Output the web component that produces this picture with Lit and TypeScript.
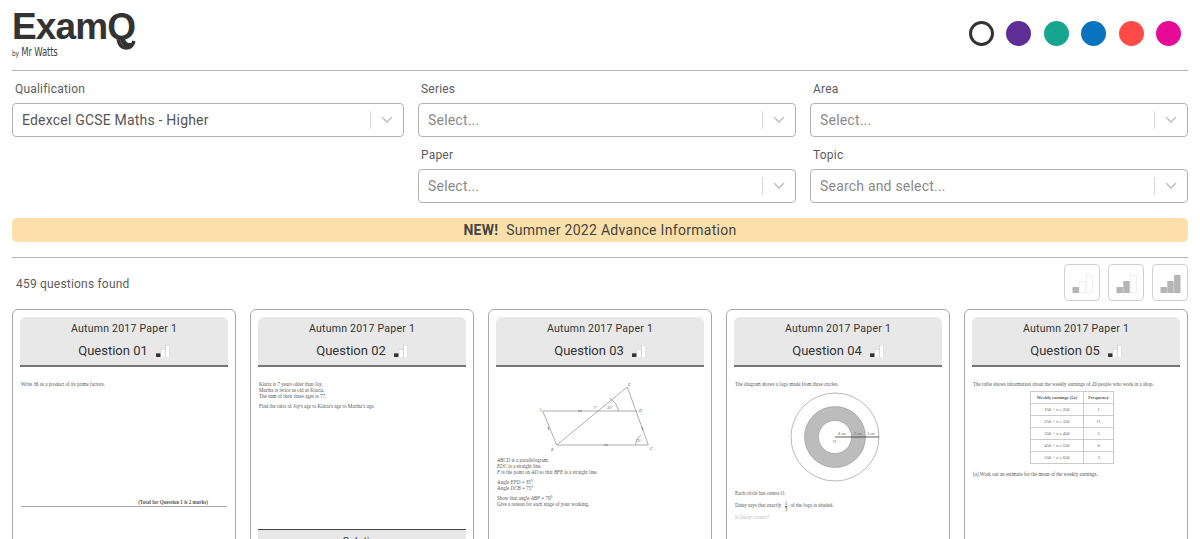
import { LitElement, html, css, svg } from 'lit';
import { customElement } from 'lit/decorators.js';

const SWATCHES = ['#5f2d96', '#16a58f', '#0a73bf', '#ff4a47', '#e60a96'];

const bars = (level: number, on: string, off: string) => html`
  <svg class="bars" viewBox="0 0 20 18" aria-hidden="true">
    ${[
      { x: 0, y: 12, h: 6 },
      { x: 6.8, y: 6, h: 12 },
      { x: 13.6, y: 0, h: 18 },
    ].map((b, i) =>
      i < level
        ? svg`<rect x=${b.x} y=${b.y} width="6.4" height=${b.h} fill=${on}></rect>`
        : svg`<rect x=${b.x + 0.3} y=${b.y + 0.3} width="5.8" height=${b.h - 0.6} fill="#fff" stroke=${off} stroke-width="0.6"></rect>`
    )}
  </svg>
`;

@customElement('select-field')
class SelectField extends LitElement {
  static properties = {
    label: { type: String },
    value: { type: String },
    placeholder: { type: String },
  };

  declare label: string;
  declare value: string;
  declare placeholder: string;

  static styles = css`
    :host {
      display: block;
    }
    .label {
      font-size: 12px;
      line-height: 18px;
      color: #5c5c5c;
      padding-left: 3px;
      letter-spacing: 0.2px;
      margin-bottom: 5px;
    }
    .control {
      display: flex;
      align-items: center;
      height: 34px;
      box-sizing: border-box;
      border: 1px solid #b3b3b3;
      border-radius: 4px;
      background: #fff;
      padding-left: 9px;
    }
    .text {
      flex: 1;
      font-size: 14px;
      letter-spacing: 0.2px;
      color: #555;
    }
    .text.empty {
      color: #8a8a8a;
    }
    .sep {
      width: 1px;
      height: 18px;
      background: #ddd;
    }
    svg {
      width: 32px;
      height: 12px;
      fill: none;
      stroke: #c4c4c4;
      stroke-width: 1.6;
    }
  `;

  render() {
    return html`
      ${this.label ? html`<div class="label">${this.label}</div>` : ''}
      <div class="control">
        <span class="text ${this.value ? '' : 'empty'}">${this.value || this.placeholder}</span>
        <span class="sep"></span>
        <svg viewBox="0 0 32 12"><path d="M11 3l5 5 5-5"></path></svg>
      </div>
    `;
  }
}

@customElement('app-root')
class AppRoot extends LitElement {
  static styles = css`
    :host {
      display: block;
      height: 539px;
      overflow: hidden;
      background: #fff;
      font-family: Roboto, 'Liberation Sans', sans-serif;
      color: #333;
    }
    .page {
      padding: 0 12px;
    }
    header {
      display: flex;
      justify-content: space-between;
      align-items: flex-start;
      height: 70px;
      border-bottom: 1px solid #b5b5b5;
    }
    .logo {
      padding-top: 7px;
      position: relative;
    }
    .logo-main {
      font-family: 'Liberation Sans', sans-serif;
      font-weight: 700;
      font-size: 37px;
      line-height: 39px;
      letter-spacing: -0.9px;
      color: #333;
    }
    .logo-by {
      font-family: 'DejaVu Sans Condensed', 'DejaVu Sans', sans-serif;
      font-size: 9.5px;
      line-height: 10px;
      color: #444;
      letter-spacing: -0.2px;
      transform: scaleY(1.2);
      transform-origin: left top;
    }
    .logo-by small {
      font-size: 6.5px;
    }
    .logo-tail {
      position: absolute;
      left: 104px;
      top: 38px;
      width: 20px;
      height: 12px;
      fill: none;
      stroke: #333;
      stroke-width: 3.4;
    }
    .swatches {
      display: flex;
      gap: 12.5px;
      padding: 20.5px 7px 0 0;
    }
    .swatch {
      width: 25px;
      height: 25px;
      border-radius: 50%;
      box-sizing: border-box;
    }
    .swatch.current {
      background: #fff;
      border: 3px solid #333;
    }
    .filters {
      display: grid;
      grid-template-columns: 392px 1fr 1fr;
      column-gap: 14px;
      row-gap: 9px;
      padding-top: 9px;
    }
    .filters .first {
      grid-column: 2;
    }
    .banner {
      margin-top: 15px;
      height: 24px;
      line-height: 24px;
      border-radius: 5px;
      background: #fddfa9;
      text-align: center;
      font-size: 14px;
      letter-spacing: 0.3px;
      color: #444;
    }
    .banner b {
      margin-right: 4px;
    }
    .rule {
      height: 1px;
      background: #b5b5b5;
      margin-top: 15px;
    }
    .toolbar {
      display: flex;
      align-items: center;
      gap: 8px;
      padding: 6px 0 8px 4px;
      height: 37px;
    }
    .count {
      flex: 1;
      font-size: 12px;
      letter-spacing: 0.2px;
      color: #5c5c5c;
      margin-top: 3px;
    }
    .level {
      width: 36px;
      height: 37px;
      box-sizing: border-box;
      border: 1px solid #d0d0d0;
      border-radius: 4px;
      background: #fff;
      display: flex;
      align-items: flex-end;
      justify-content: center;
      padding: 0 0 7px;
    }
    .level .bars {
      width: 21px;
      height: 18px;
    }
    .cards {
      display: grid;
      grid-template-columns: repeat(5, 224px);
      column-gap: 14px;
    }
    .card {
      box-sizing: border-box;
      height: 300px;
      border: 1px solid #a8a8a8;
      border-radius: 6px;
      padding: 7px;
      background: #fff;
    }
    .card-head {
      background: #e8e8e8;
      border-radius: 6px 6px 0 0;
      border-bottom: 2px solid #777;
      height: 48px;
      text-align: center;
      color: #333;
    }
    .paper {
      font-size: 10.5px;
      letter-spacing: 0.25px;
      line-height: 14px;
      padding-top: 5px;
    }
    .qnum {
      display: flex;
      align-items: center;
      justify-content: center;
      gap: 8px;
      font-size: 13px;
      line-height: 18px;
      margin-top: 6px;
    }
    .qnum .bars {
      width: 14px;
      height: 12.5px;
    }
    .sheet {
      font-family: 'Liberation Serif', serif;
      font-size: 5.05px;
      line-height: 6px;
      color: #555;
      height: 162px;
      padding: 14px 1px 0;
      box-sizing: border-box;
    }
    .sheet p {
      margin: 0 0 4px;
    }
    .total {
      text-align: right;
      font-weight: 700;
      margin-top: 112px;
      padding-right: 19px;
      border-bottom: 1px solid #aaa;
      line-height: 7px;
    }
    .answer {
      border-top: 1px solid #444;
      background: #e8e8e8;
      text-align: center;
      font-size: 10.5px;
      line-height: 16px;
      padding-top: 4px;
    }
    .figure {
      display: block;
      margin: 0 auto;
    }
    .figure text {
      font-family: 'Liberation Serif', serif;
      font-size: 4px;
      font-style: italic;
      fill: #555;
    }
    table {
      border-collapse: collapse;
      margin: 4px 0 7px 57px;
      width: 84px;
      table-layout: fixed;
      font-size: 4.5px;
      line-height: 11px;
      text-align: center;
    }
    td,
    th {
      border: 1px solid #ccc;
      padding: 0;
    }
    th:first-child {
      width: 52px;
    }
    .q3 {
      padding-top: 16px;
    }
    .q3 .text {
      padding-top: 2px;
    }
    .sheet .each {
      margin-top: 7px;
      margin-bottom: 5px;
    }
    .frac {
      display: inline-block;
      vertical-align: middle;
      text-align: center;
      line-height: 4.5px;
      margin: 0 2px;
    }
    .frac span {
      display: block;
    }
    .frac span:first-child {
      border-bottom: 0.5px solid #555;
    }
    .sheet .faint {
      color: #bbb;
      margin-top: -1px;
    }
  `;

  private sheet(index: number) {
    switch (index) {
      case 0:
        return html`
          <p>Write 36 as a product of its prime factors.</p>
          <div class="total">(Total for Question 1 is 2 marks)</div>
        `;
      case 1:
        return html`
          <p>Kiaria is 7 years older than Joy.<br />Martha is twice as old as Kiaria.<br />The sum of their three ages is 77.</p>
          <p>Find the ratio of Joy's age to Kiaria's age to Martha's age.</p>
        `;
      case 2:
        return html`
          <svg class="figure" width="208" height="72" viewBox="0 0 208 72">
            <g fill="none" stroke="#777" stroke-width="0.6">
              <path d="M45.7 28H139.7M45.7 28L59.7 62H151.3L130.3 4L59.7 62"></path>
              <path d="M112.3 15.3a17 17 0 0 1 9 12.7M138.7 62a12 12 0 0 1 5.3-10"></path>
            </g>
            <path d="M81 28h4M107 62h4M51 44l1 3M145 44l1 3" stroke="#666" stroke-width="0.8"></path>
            <text x="42" y="28">A</text>
            <text x="97" y="26">F</text>
            <text x="142" y="29">D</text>
            <text x="54" y="68">B</text>
            <text x="153" y="67">C</text>
            <text x="131" y="3">E</text>
            <text x="110" y="26" font-size="3.5">35°</text>
            <text x="139" y="59" font-size="3.5">75°</text>
          </svg>
          <div class="text">
            <p><i>ABCD</i> is a parallelogram.<br /><i>EDC</i> is a straight line.<br /><i>F</i> is the point on <i>AD</i> so that <i>BFE</i> is a straight line.</p>
            <p>Angle <i>EFD</i> = 35°<br />Angle <i>DCB</i> = 75°</p>
            <p>Show that angle <i>ABF</i> = 70°<br />Give a reason for each stage of your working.</p>
          </div>
        `;
      case 3:
        return html`
          <p>The diagram shows a logo made from three circles.</p>
          <svg class="figure" width="208" height="92" viewBox="0 0 208 92">
            <circle cx="100" cy="46" r="44" fill="#fff" stroke="#888" stroke-width="0.6"></circle>
            <circle cx="100" cy="46" r="30.5" fill="#bcbcbc" stroke="#888" stroke-width="0.5"></circle>
            <circle cx="100" cy="46" r="16.5" fill="#fff" stroke="#888" stroke-width="0.5"></circle>
            <path d="M100 46H144" stroke="#333" stroke-width="0.8"></path>
            <text x="103" y="44">4 cm</text>
            <text x="119" y="44">3 cm</text>
            <text x="132" y="44">3 cm</text>
            <text x="98" y="52">O</text>
          </svg>
          <p class="each">Each circle has centre <i>O</i>.</p>
          <p>Daisy says that exactly <span class="frac"><span>1</span><span>3</span></span> of the logo is shaded.</p>
          <p class="faint">Is Daisy correct?</p>
        `;
      default:
        return html`
          <p>The table shows information about the weekly earnings of 20 people who work in a shop.</p>
          <table>
            <tr><th>Weekly earnings (£x)</th><th>Frequency</th></tr>
            <tr><td>150 &lt; x ≤ 250</td><td>1</td></tr>
            <tr><td>250 &lt; x ≤ 350</td><td>11</td></tr>
            <tr><td>350 &lt; x ≤ 450</td><td>5</td></tr>
            <tr><td>450 &lt; x ≤ 550</td><td>0</td></tr>
            <tr><td>550 &lt; x ≤ 650</td><td>3</td></tr>
          </table>
          <p>(a) Work out an estimate for the mean of the weekly earnings.</p>
        `;
    }
  }

  render() {
    return html`
      <div class="page">
        <header>
          <div class="logo">
            <div class="logo-main">ExamQ</div>
            <svg class="logo-tail" viewBox="0 0 20 12"><path d="M2 1c1 6 3 9 8 9s7-3 8-7"></path></svg>
            <div class="logo-by"><small>by</small> Mr Watts</div>
          </div>
          <div class="swatches">
            <div class="swatch current"></div>
            ${SWATCHES.map((c) => html`<div class="swatch" style="background:${c}"></div>`)}
          </div>
        </header>

        <section class="filters">
          <select-field label="Qualification" value="Edexcel GCSE Maths - Higher"></select-field>
          <select-field label="Series" placeholder="Select..."></select-field>
          <select-field label="Area" placeholder="Select..."></select-field>
          <select-field class="first" label="Paper" placeholder="Select..."></select-field>
          <select-field label="Topic" placeholder="Search and select..."></select-field>
        </section>

        <div class="banner"><b>NEW!</b> Summer 2022 Advance Information</div>
        <div class="rule"></div>

        <div class="toolbar">
          <span class="count">459 questions found</span>
          ${[1, 2, 3].map((l) => html`<button class="level">${bars(l, '#b5b5b5', '#e6e6e6')}</button>`)}
        </div>

        <section class="cards">
          ${[0, 1, 2, 3, 4].map(
            (i) => html`
              <article class="card">
                <div class="card-head">
                  <div class="paper">Autumn 2017 Paper 1</div>
                  <div class="qnum">Question 0${i + 1} ${bars(1, '#333', '#c4c4c4')}</div>
                </div>
                <div class="sheet ${i === 2 ? 'q3' : ''}">${this.sheet(i)}</div>
                ${i === 1 ? html`<div class="answer">Solution</div>` : ''}
              </article>
            `
          )}
        </section>
      </div>
    `;
  }
}
